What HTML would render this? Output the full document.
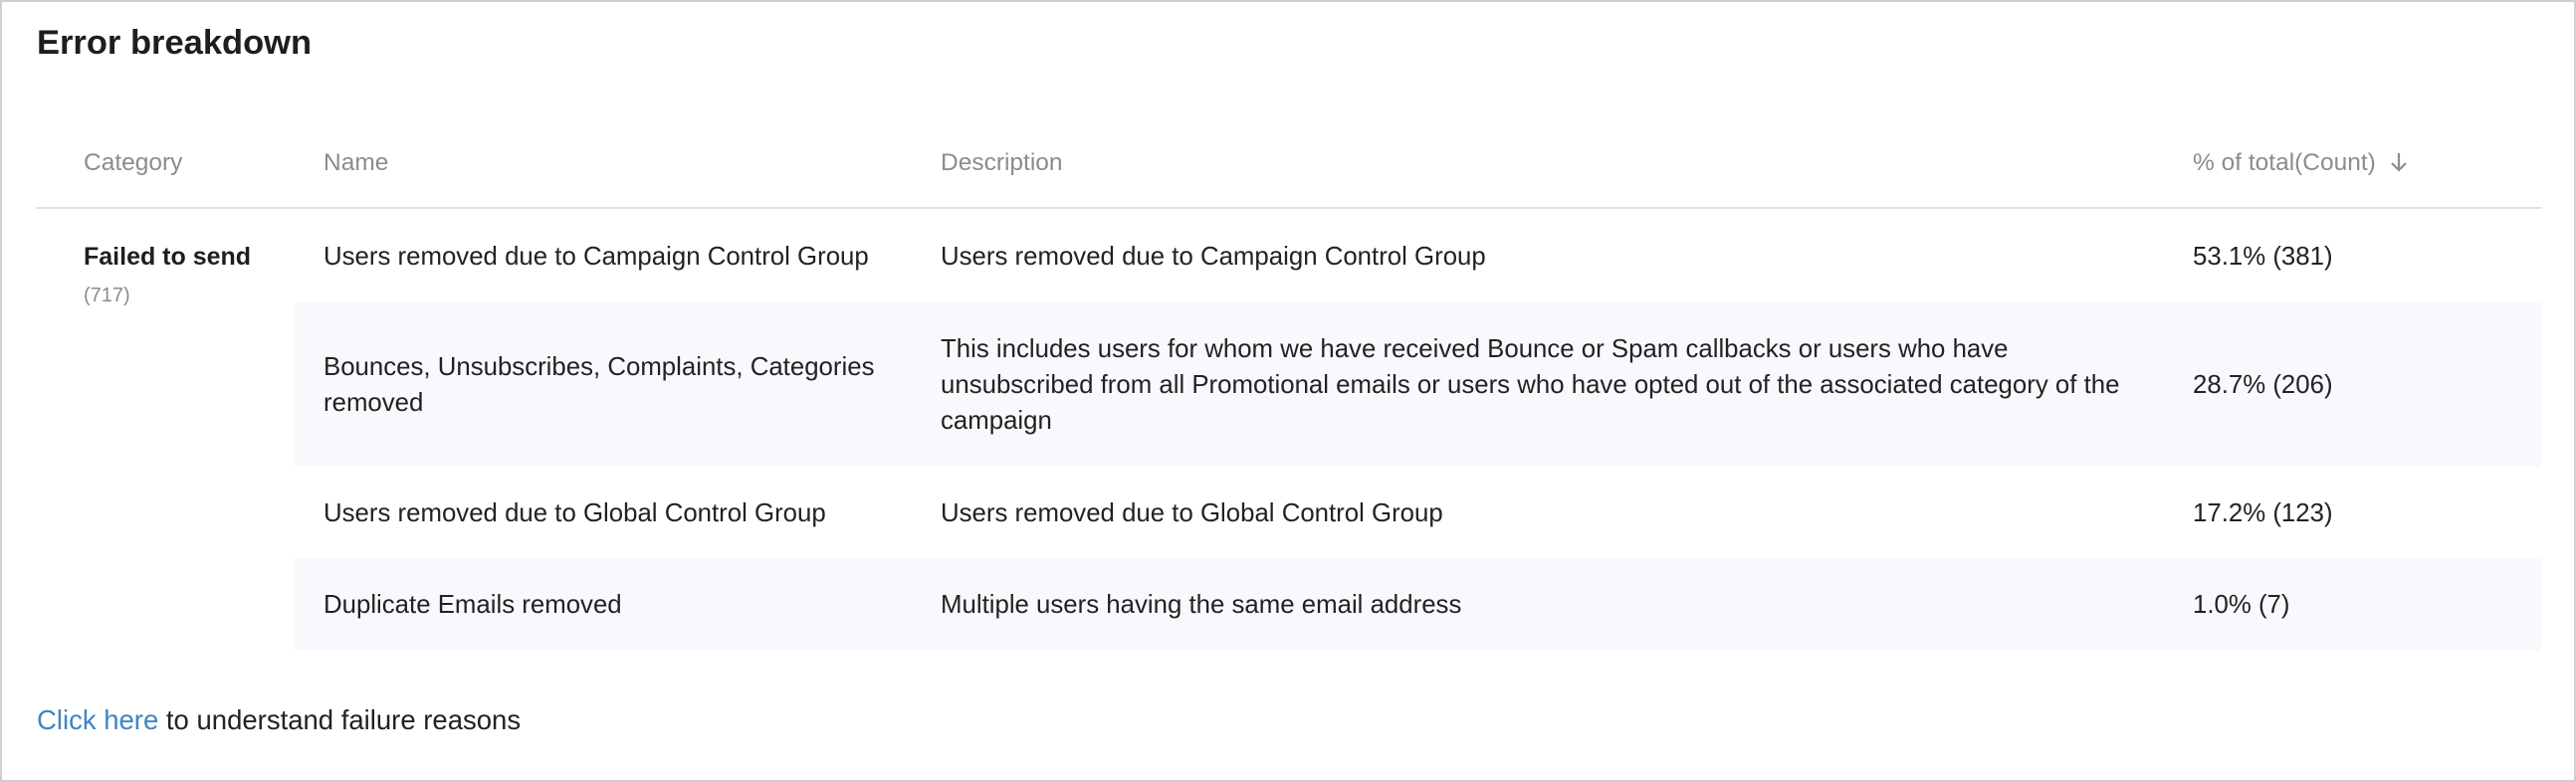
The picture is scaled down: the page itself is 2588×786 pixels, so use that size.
<!DOCTYPE html>
<html><head><meta charset="utf-8"><style>
*{margin:0;padding:0;box-sizing:border-box}
body{width:2588px;height:786px;background:#fff;font-family:"Liberation Sans",sans-serif;color:#222;position:relative;overflow:hidden}
.frame{position:absolute;left:0;top:0;width:2588px;height:786px;border:2px solid #cfcfcf}
.t{position:absolute;white-space:nowrap;font-size:25.8px;line-height:36px}
.h{color:#8c8c8c;font-size:24.5px}
.bg{position:absolute;left:296px;width:2257px;background:#f8f9fc}
</style></head><body>
<div class="frame"></div>
<div class="t" style="left:37px;top:23px;font-size:34.5px;font-weight:bold;line-height:40px;color:#1e1e1e">Error breakdown</div>
<div class="t h" style="left:84px;top:146px">Category</div>
<div class="t h" style="left:325px;top:146px">Name</div>
<div class="t h" style="left:945px;top:146px">Description</div>
<div class="t h" style="left:2203px;top:146px">% of total(Count)</div>
<svg style="position:absolute;left:2398px;top:151px" width="24" height="24" viewBox="0 0 24 24"><path d="M12 3v17M5 13l7 7 7-7" stroke="#8c8c8c" stroke-width="2.2" fill="none"/></svg>
<div style="position:absolute;left:36px;top:208px;width:2517px;height:2px;background:#dde0ec"></div>
<div class="bg" style="top:304px;height:165px"></div>
<div class="bg" style="top:561px;height:93px"></div>
<div class="t" style="left:84px;top:240px;font-weight:bold;font-size:25px;color:#1e1e1e">Failed to send</div>
<div class="t" style="left:84px;top:279px;font-size:20px;color:#8c8c8c">(717)</div>
<div class="t" style="left:325px;top:240px">Users removed due to Campaign Control Group</div>
<div class="t" style="left:945px;top:240px">Users removed due to Campaign Control Group</div>
<div class="t" style="left:2203px;top:240px">53.1% (381)</div>
<div class="t" style="left:325px;top:351px">Bounces, Unsubscribes, Complaints, Categories<br>removed</div>
<div class="t" style="left:945px;top:333px">This includes users for whom we have received Bounce or Spam callbacks or users who have<br>unsubscribed from all Promotional emails or users who have opted out of the associated category of the<br>campaign</div>
<div class="t" style="left:2203px;top:369px">28.7% (206)</div>
<div class="t" style="left:325px;top:498px">Users removed due to Global Control Group</div>
<div class="t" style="left:945px;top:498px">Users removed due to Global Control Group</div>
<div class="t" style="left:2203px;top:498px">17.2% (123)</div>
<div class="t" style="left:325px;top:590px">Duplicate Emails removed</div>
<div class="t" style="left:945px;top:590px">Multiple users having the same email address</div>
<div class="t" style="left:2203px;top:590px">1.0% (7)</div>
<div class="t" style="left:37px;top:706px;font-size:27.5px"><span style="color:#3d85c6">Click here</span> to understand failure reasons</div>
</body></html>
